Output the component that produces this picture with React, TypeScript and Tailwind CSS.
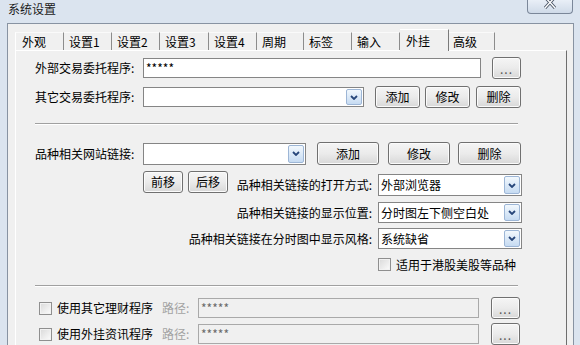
import type { ReactNode } from 'react';

const TABS: Array<{ label: string; cls: string; active?: boolean }> = [
  { label: '外观', cls: 'w-[49px] border-l border-l-white pl-[6px]' },
  { label: '设置1', cls: 'w-[48px] pl-[5px]' },
  { label: '设置2', cls: 'w-[48px] pl-[5px]' },
  { label: '设置3', cls: 'w-[49px] pl-[5px]' },
  { label: '设置4', cls: 'w-[48px] pl-[5px]' },
  { label: '周期', cls: 'w-[47px] pl-[5px]' },
  { label: '标签', cls: 'w-[48px] pl-[5px]' },
  { label: '输入', cls: 'w-[48px] pl-[5px]' },
  { label: '外挂', cls: 'w-[49px] pl-[6px]', active: true },
  { label: '高级', cls: 'w-[46px] pl-[4px]' },
];

function Tab({ label, cls, active }: { label: string; cls: string; active?: boolean }) {
  if (active) {
    return (
      <div className={`relative z-10 -mb-px h-[22px] shrink-0 border-t border-r border-t-white border-r-[#7a7a7a] bg-[#f0f0f0] pt-[4px] leading-[14px] ${cls}`}>
        {label}
      </div>
    );
  }
  return (
    <div className={`h-[18px] shrink-0 border-t border-r border-t-[#fafafa] border-r-[#8c8c8c] pt-[2px] leading-[14px] ${cls}`}>
      {label}
    </div>
  );
}

function Btn({ cls, children }: { cls: string; children: ReactNode }) {
  return (
    <div className={`flex shrink-0 items-center justify-center rounded-[3px] border border-[#707070] bg-linear-to-b from-[#f5f5f5] via-[#ebebeb] to-[#d8d8d8] leading-[14px] shadow-[inset_0_0_0_1px_#fbfbfb] ${cls}`}>
      {children}
    </div>
  );
}

function Dots() {
  return <span className="pt-[2px] tracking-[1px] text-[#555]">...</span>;
}

function Edit({ cls, value, disabled }: { cls: string; value?: string; disabled?: boolean }) {
  return (
    <div
      className={`flex shrink-0 items-center border pl-[2px] leading-[14px] ${
        disabled ? 'border-[#a9a9a9] bg-[#f0f0f0] text-[#6a6a6a]' : 'border-[#858585] bg-white'
      } ${cls}`}
    >
      {value}
    </div>
  );
}

function Combo({ cls, value }: { cls: string; value?: string }) {
  return (
    <div className={`flex shrink-0 items-center border border-[#858585] bg-white p-px ${cls}`}>
      <span className="flex-1 pl-[1px] leading-[14px]">{value}</span>
      <div className="flex h-full w-[16px] items-center justify-center rounded-[2px] border border-[#9db6d6] bg-linear-to-b from-[#f2f8fd] to-[#c6dbf2]">
        <svg width="8" height="5" viewBox="0 0 8 5">
          <path d="M1 1 L4 4 L7 1" fill="none" stroke="#27467a" strokeWidth="1.8" />
        </svg>
      </div>
    </div>
  );
}

function Check() {
  return (
    <div className="h-[13px] w-[13px] shrink-0 border border-[#8f8f8f] bg-linear-to-br from-[#d9d9d9] to-[#fcfcfc] shadow-[inset_0_0_0_1px_#f2f2f2]" />
  );
}

function Sep({ cls }: { cls: string }) {
  return <div className={`w-[483px] border-t border-b border-t-[#a0a0a0] border-b-white ${cls}`} />;
}

function PluginRow({ cls, label }: { cls: string; label: string }) {
  return (
    <div className={`flex h-[22px] items-center ${cls}`}>
      <div className="ml-[4px]">
        <Check />
      </div>
      <span className="ml-[5px] w-[105px] leading-[14px]">{label}</span>
      <span className="w-[36px] leading-[14px] text-[#a3a3a3]">路径:</span>
      <Edit cls="h-[20px] w-[281px]" value="*****" disabled />
      <Btn cls="ml-[12px] h-[22px] w-[29px]">
        <Dots />
      </Btn>
    </div>
  );
}

export default function App() {
  return (
    <div className="flex h-[345px] w-[580px] flex-col overflow-hidden bg-[#dbe4ef] font-['Noto_Sans_CJK_SC','Noto_Sans',sans-serif] text-[12px] text-black">
      {/* title bar */}
      <div className="flex h-[23px] shrink-0 items-start justify-between">
        <span className="ml-[8px] mt-[2px] leading-[14px] text-[#1a1a1a]">系统设置</span>
        <div className="mr-[7px] flex h-[14px] w-[46px] items-end justify-center rounded-b-[4px] border border-t-0 border-[#7b8799] bg-linear-to-b from-[#e9eff7] to-[#cfdae8] pb-[3px]">
          <svg width="12" height="10" viewBox="0 0 12 10">
            <path d="M1 -3 L11 8 M11 -3 L1 8" stroke="#4a5566" strokeWidth="3.2" />
            <path d="M1 -3 L11 8 M11 -3 L1 8" stroke="#ffffff" strokeWidth="1.4" />
          </svg>
        </div>
      </div>

      {/* client */}
      <div className="flex min-h-0 flex-1 pl-[7px]">
        <div className="flex w-[567px] flex-col border-l border-t border-r border-[#8893a2] bg-[#f0f0f0] pl-[7px] pt-[5px]">
          <div className="flex h-[21px] shrink-0 items-end">
            {TABS.map((t) => (
              <Tab key={t.label} label={t.label} cls={t.cls} active={t.active} />
            ))}
          </div>

          <div className="w-[552px] flex-1 border-l border-t border-r border-l-white border-t-white border-r-[#6e6e6e] pl-[19px] pt-[6px]">
            {/* trading programs */}
            <div className="flex h-[22px] items-center">
              <span className="w-[108px] leading-[14px]">外部交易委托程序:</span>
              <Edit cls="h-[20px] w-[338px]" value="*****" />
              <Btn cls="ml-[11px] h-[22px] w-[29px]">
                <Dots />
              </Btn>
            </div>
            <div className="mt-[7px] flex h-[22px] items-center">
              <span className="w-[108px] leading-[14px]">其它交易委托程序:</span>
              <Combo cls="h-[20px] w-[221px]" />
              <Btn cls="ml-[11px] h-[22px] w-[45px]">添加</Btn>
              <Btn cls="ml-[5px] h-[22px] w-[45px]">修改</Btn>
              <Btn cls="ml-[6px] h-[22px] w-[45px]">删除</Btn>
            </div>

            <Sep cls="mt-[15px]" />

            {/* site links */}
            <div className="mt-[17px] flex h-[23px] items-center">
              <span className="w-[108px] leading-[14px]">品种相关网站链接:</span>
              <Combo cls="h-[22px] w-[163px]" />
              <Btn cls="ml-[11px] h-[23px] w-[62px]">添加</Btn>
              <Btn cls="ml-[9px] h-[23px] w-[62px]">修改</Btn>
              <Btn cls="ml-[8px] h-[23px] w-[63px]">删除</Btn>
            </div>
            <div className="mt-[6px] flex h-[25px] w-[487px]">
              <Btn cls="ml-[108px] h-[22px] w-[40px] self-start">前移</Btn>
              <Btn cls="ml-[5px] h-[22px] w-[40px] self-start">后移</Btn>
              <div className="flex h-[22px] flex-1 items-center justify-end self-end pr-[6px] leading-[14px]">
                品种相关链接的打开方式:
              </div>
              <Combo cls="h-[22px] w-[144px] self-end" value="外部浏览器" />
            </div>
            <div className="mt-[6px] flex h-[21px] items-center">
              <span className="w-[343px] pr-[6px] text-right leading-[14px]">品种相关链接的显示位置:</span>
              <Combo cls="h-[21px] w-[144px]" value="分时图左下侧空白处" />
            </div>
            <div className="mt-[5px] flex h-[21px] items-center">
              <span className="w-[343px] pr-[6px] text-right leading-[14px]">品种相关链接在分时图中显示风格:</span>
              <Combo cls="h-[21px] w-[144px]" value="系统缺省" />
            </div>
            <div className="mt-[8px] flex h-[15px] items-center">
              <div className="ml-[343px]">
                <Check />
              </div>
              <span className="ml-[5px] leading-[14px]">适用于港股美股等品种</span>
            </div>

            <Sep cls="mt-[13px]" />

            <PluginRow cls="mt-[10px]" label="使用其它理财程序" />
            <PluginRow cls="mt-[4px]" label="使用外挂资讯程序" />
          </div>
        </div>
      </div>
    </div>
  );
}
